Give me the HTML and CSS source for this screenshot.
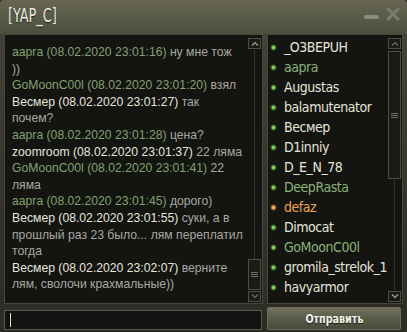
FILE: index.html
```html
<!DOCTYPE html>
<html lang="ru">
<head>
<meta charset="utf-8">
<title>[YAP_C]</title>
<link rel="stylesheet" href="styles.css">
</head>
<body>
<div class="window">
  <div class="titlebar">
    <span class="title">[YAP_C]</span>
    <span class="tb-min"></span>
    <svg class="tb-close" width="14" height="14" viewBox="0 0 14 14"><path d="M2 2 L12 12 M12 2 L2 12" stroke="#7d7d6d" stroke-width="3" stroke-linecap="round"/></svg>
  </div>
  <div class="main">
    <div class="panel chat">
      <div class="messages">
        <p class="msg green"><span class="who">aapra (08.02.2020 23:01:16)</span> ну мне тож<br>))</p>
        <p class="msg green"><span class="who">GoMoonC00l (08.02.2020 23:01:20)</span> взял</p>
        <p class="msg white"><span class="who">Весмер (08.02.2020 23:01:27)</span> так<br>почем?</p>
        <p class="msg green"><span class="who">aapra (08.02.2020 23:01:28)</span> цена?</p>
        <p class="msg white"><span class="who">zoomroom (08.02.2020 23:01:37)</span> 22 ляма</p>
        <p class="msg green"><span class="who">GoMoonC00l (08.02.2020 23:01:41)</span> 22 ляма</p>
        <p class="msg green"><span class="who">aapra (08.02.2020 23:01:45)</span> дорого)</p>
        <p class="msg white"><span class="who">Весмер (08.02.2020 23:01:55)</span> суки, а в прошлый раз 23 было... лям переплатил тогда</p>
        <p class="msg white"><span class="who">Весмер (08.02.2020 23:02:07)</span> верните лям, сволочи крахмальные))</p>
      </div>
      <div class="scroll">
        <div class="sbtn"><svg width="8" height="5" viewBox="0 0 8 5"><path d="M1 4.5 L4 1.5 L7 4.5" fill="none" stroke="#a4a496" stroke-width="1.2"/></svg></div>
        <div class="track end"><div class="thumb short"><span class="grip"></span></div></div>
        <div class="sbtn"><svg width="8" height="5" viewBox="0 0 8 5"><path d="M1 0.5 L4 3.5 L7 0.5" fill="none" stroke="#6e6e62" stroke-width="1.2"/></svg></div>
      </div>
    </div>
    <div class="panel users">
      <ul class="list">
        <li class="user"><i class="dot"></i>_O3BEPUH</li>
        <li class="user friend"><i class="dot"></i>aapra</li>
        <li class="user"><i class="dot"></i>Augustas</li>
        <li class="user"><i class="dot"></i>balamutenator</li>
        <li class="user"><i class="dot"></i>Весмер</li>
        <li class="user"><i class="dot"></i>D1inniy</li>
        <li class="user"><i class="dot"></i>D_E_N_78</li>
        <li class="user friend"><i class="dot"></i>DeepRasta</li>
        <li class="user self"><i class="dot"></i>defaz</li>
        <li class="user"><i class="dot"></i>Dimocat</li>
        <li class="user friend"><i class="dot"></i>GoMoonC00l</li>
        <li class="user"><i class="dot"></i>gromila_strelok_1</li>
        <li class="user"><i class="dot"></i>havyarmor</li>
      </ul>
      <div class="scroll">
        <div class="sbtn"><svg width="8" height="5" viewBox="0 0 8 5"><path d="M1 4.5 L4 1.5 L7 4.5" fill="none" stroke="#6e6e62" stroke-width="1.2"/></svg></div>
        <div class="track"><div class="thumb long"><span class="grip"></span></div></div>
        <div class="sbtn"><svg width="8" height="5" viewBox="0 0 8 5"><path d="M1 0.5 L4 3.5 L7 0.5" fill="none" stroke="#a4a496" stroke-width="1.2"/></svg></div>
      </div>
    </div>
  </div>
  <div class="bottom">
    <div class="input"><span class="caret"></span></div>
    <button class="send"><span class="send-label">Отправить</span></button>
  </div>
</div>
</body>
</html>
```
FILE: styles.css
```css
* { box-sizing: border-box; }
html, body { margin: 0; padding: 0; background: #2f2f28; }
.window {
  width: 407px;
  height: 332px;
  display: flex;
  flex-direction: column;
  background: linear-gradient(#45453a, #34342c 60%, #2c2c25);
  border-radius: 4px 4px 0 0;
  overflow: hidden;
}
.titlebar {
  height: 34px;
  flex: none;
  display: flex;
  align-items: center;
  padding: 0 7px 4px 8px;
  background: linear-gradient(#666653, #5a5a48 50%, #4e4e3f);
}
.title {
  display: inline-block;
  font-family: "DejaVu Sans Condensed", "DejaVu Sans", sans-serif;
  font-stretch: condensed;
  font-size: 17px;
  color: #ececE2;
  text-shadow: 0 1px 1px #222;
  transform: scale(0.84, 1.1);
  transform-origin: left center;
}
.tb-min {
  margin-left: auto;
  width: 15px;
  height: 4px;
  border-radius: 2px;
  background: #8b8b7c;
  margin-top: 4px;
}
.tb-close { margin-left: 7px; margin-top: -3px; }
.main {
  display: grid;
  grid-template-columns: 259px 136px;
  column-gap: 4px;
  padding: 0 4px;
  height: 270px;
  flex: none;
}
.panel {
  background: #141411;
  border: 1px solid #47473d;
  display: flex;
  min-height: 0;
}
.messages {
  width: 240px;
  padding: 9px 0 0 7px;
  font-family: "Liberation Sans", Arial, sans-serif;
  font-size: 12.2px;
  line-height: 16.6px;
  color: #a8a8a0;
}
.msg { margin: 0; }
.green .who { color: #82a072; }
.white .who { color: #e6e6dc; }
.scroll {
  margin-left: auto;
  width: 13px;
  margin-right: 1px;
  padding: 3px 0 1px;
  display: flex;
  flex-direction: column;
  gap: 1px;
}
.sbtn {
  height: 11px;
  border: 1px solid #4e4e45;
  background: #1b1b17;
  display: flex;
  align-items: center;
  justify-content: center;
}
.track {
  flex: 1;
  display: flex;
  flex-direction: column;
  background: linear-gradient(90deg, transparent 6px, #34342d 6px, #34342d 7px, transparent 7px);
}
.track.end { justify-content: flex-end; }
.thumb {
  border: 1px solid #4e4e45;
  background: #1a1a16;
  display: flex;
  align-items: center;
  justify-content: center;
}
.thumb.short { height: 31px; }
.thumb.long { height: 128px; margin-top: 1px; }
.grip {
  width: 7px;
  height: 5px;
  border-top: 1px solid #6e6e62;
  border-bottom: 1px solid #6e6e62;
  background: linear-gradient(transparent 1.5px, #6e6e62 1.5px, #6e6e62 2.5px, transparent 2.5px);
}
.users { padding-left: 2px; }
.list {
  list-style: none;
  margin: 0;
  padding: 2px 0 0;
  font-family: "DejaVu Sans Condensed", "DejaVu Sans", sans-serif;
  font-stretch: condensed;
  font-size: 14px;
  letter-spacing: -0.45px;
  color: #e4e4da;
}
.user {
  height: 20px;
  display: flex;
  align-items: center;
  gap: 7px;
  white-space: nowrap;
}
.dot {
  width: 7px;
  height: 7px;
  border-radius: 50%;
  flex: none;
  background: radial-gradient(circle, #8ed062 0 1.2px, #4f8a33 1.8px, rgba(60,110,40,0.45) 3px, transparent 3.5px);
}
.friend { color: #88b276; }
.self { color: #eea455; }
.self .dot { background: radial-gradient(circle, #f3b36a 0 1.2px, #b86d2d 1.8px, rgba(150,90,40,0.45) 3px, transparent 3.5px); }
.bottom {
  display: flex;
  align-items: flex-end;
  padding: 3px 6px 2px 4px;
  gap: 5px;
}
.input {
  width: 258px;
  height: 20px;
  background: #121210;
  border: 1px solid #5a5a50;
  display: flex;
  align-items: center;
  padding-left: 5px;
}
.caret { width: 1px; height: 14px; background: #d8d8d0; }
.send {
  width: 134px;
  height: 23px;
  border: 1px solid #6e6e5f;
  border-radius: 2px;
  background: linear-gradient(#72725f, #5c5c4b 45%, #4a4a3c);
  color: #f2f2ea;
  font-family: "DejaVu Sans Condensed", "DejaVu Sans", sans-serif;
  font-stretch: condensed;
  font-weight: bold;
  font-size: 13px;
  text-shadow: 0 1px 1px #1a1a14;
  padding: 0;
}
.send-label { display: inline-block; transform: scaleX(0.82); }
```
